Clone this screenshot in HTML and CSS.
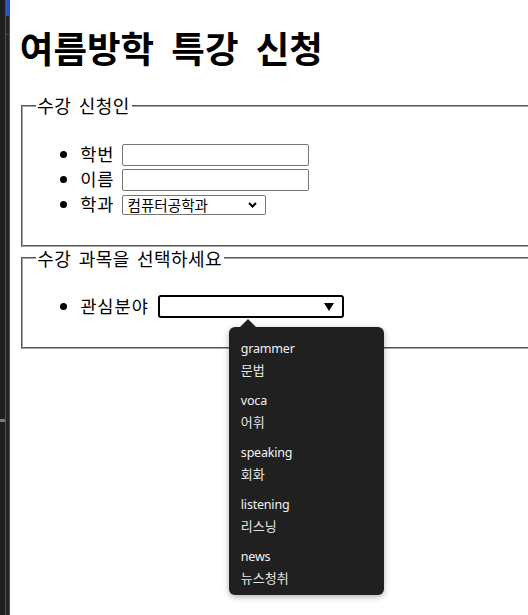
FILE: index.html
```html
<!DOCTYPE html>
<html lang="ko">
  <head>
    <meta charset="utf-8" />
    <title>여름방학 특강 신청</title>
    <link rel="stylesheet" href="styles.css">
  </head>
  <body>
    <div class="page">
      <div class="gutter">
        <div class="gutter-col">
          <span class="gutter-tick"></span>
        </div>
        <div class="gutter-line"></div>
        <div class="gutter-rail">
          <span class="gutter-active"></span>
          <span class="gutter-mark"></span>
        </div>
        <div class="gutter-line"></div>
      </div>

      <main class="doc">
        <h1>여름방학 특강 신청</h1>

        <fieldset>
          <legend>수강 신청인</legend>
          <ul>
            <li>학번 <input type="text" class="text-input" /></li>
            <li>이름 <input type="text" class="text-input" /></li>
            <li>
              학과
              <span class="select-wrap">
                <select class="select">
                  <option>컴퓨터공학과</option>
                  <option>전자공학과</option>
                  <option>기계공학과</option>
                </select>
                <svg class="chevron" width="9" height="6" viewBox="0 0 9 6">
                  <path d="M1 1l3.5 3.5L8 1" fill="none" stroke="#000" stroke-width="2" />
                </svg>
              </span>
            </li>
          </ul>
        </fieldset>

        <fieldset>
          <legend>수강 과목을 선택하세요</legend>
          <ul>
            <li>
              관심분야
              <span class="combo">
                <input type="text" class="combo-input" list="subjects" />
                <span class="combo-arrow"></span>

                <div class="datalist">
                  <span class="datalist-caret"></span>
                  <div class="datalist-item">
                    <div class="item-value">grammer</div>
                    <div class="item-label">문법</div>
                  </div>
                  <div class="datalist-item">
                    <div class="item-value">voca</div>
                    <div class="item-label">어휘</div>
                  </div>
                  <div class="datalist-item">
                    <div class="item-value">speaking</div>
                    <div class="item-label">회화</div>
                  </div>
                  <div class="datalist-item">
                    <div class="item-value">listening</div>
                    <div class="item-label">리스닝</div>
                  </div>
                  <div class="datalist-item">
                    <div class="item-value">news</div>
                    <div class="item-label">뉴스청취</div>
                  </div>
                </div>
              </span>
            </li>
          </ul>
        </fieldset>
      </main>
    </div>
  </body>
</html>
```

FILE: styles.css
```css
html,
body {
  margin: 0;
  padding: 0;
  height: 615px;
  overflow: hidden;
  background: #fff;
}
body {
  font-family: "Malgun Gothic", "Noto Sans CJK KR", "Noto Sans", sans-serif;
  font-size: 17.6px;
  line-height: 23px;
  color: #000;
}
.page {
  display: flex;
  height: 615px;
}

/* editor gutter on the left */
.gutter {
  display: flex;
  flex: none;
  width: 10px;
  background-color: #1f1f1f;
}
.gutter-col {
  width: 5px;
  display: flex;
  flex-direction: column;
}
.gutter-tick {
  display: block;
  margin-top: 419px;
  height: 3px;
  background-color: #7a7a7a;
}
.gutter-line {
  width: 1px;
  background-color: #4e4e4e;
}
.gutter-rail {
  width: 3px;
  display: flex;
  flex-direction: column;
  background-color: #252525;
}
.gutter-active {
  display: block;
  height: 16px;
  background-color: #2d55c8;
}
.gutter-mark {
  display: block;
  margin-top: 18px;
  height: 1px;
  background-color: #4a4a4a;
}

/* page content */
.doc {
  flex: none;
  width: 640px;
  padding: 0 8.8px;
}
.doc h1 {
  font-size: 36.5px;
  line-height: 47px;
  font-weight: 700;
  word-spacing: 7px;
  margin: 23.6px 0 23.6px 1px;
}
fieldset {
  margin: 0 2.2px;
  padding: 6.2px 13.2px 11px;
  border: 2px groove #a8a8a8;
}
legend {
  padding: 0 2.2px 0 1.2px;
  font-size: 18px;
  line-height: 23px;
  letter-spacing: 0.4px;
  word-spacing: 2px;
}
ul {
  margin: 17.6px 0;
  padding-left: 44px;
}
li {
  height: 25px;
  line-height: 25px;
  letter-spacing: 1px;
}
.text-input {
  box-sizing: border-box;
  width: 187px;
  height: 22px;
  margin: 3px 0 0 2px;
  padding: 1px 2px;
  border: 1px solid #767676;
  border-radius: 2px;
  vertical-align: top;
  font-size: 14.6px;
}
.select-wrap {
  position: relative;
  display: inline-block;
  margin: 4px 0 0 2px;
  vertical-align: top;
  line-height: 0;
  letter-spacing: 0;
}
.select {
  appearance: none;
  box-sizing: border-box;
  width: 144px;
  height: 20px;
  margin: 0;
  padding: 0 20px 0 4px;
  border: 1px solid #767676;
  border-radius: 2px;
  background: #fff;
  color: #000;
  font-family: "Malgun Gothic", "Noto Sans CJK KR", sans-serif;
  font-size: 14.6px;
  line-height: 18px;
}
.chevron {
  position: absolute;
  right: 9px;
  top: 7px;
}

/* input with datalist */
.combo {
  position: relative;
  display: inline-block;
  margin: 2px 0 0 3px;
  vertical-align: top;
  line-height: 0;
  letter-spacing: 0;
}
.combo-input {
  box-sizing: border-box;
  width: 186px;
  height: 23px;
  margin: 0;
  padding: 1px 24px 1px 3px;
  border: 2px solid #000;
  border-radius: 3px;
  outline: none;
  font-size: 14.6px;
}
.combo-arrow {
  position: absolute;
  right: 10px;
  top: 8px;
  width: 0;
  height: 0;
  border-left: 5px solid transparent;
  border-right: 5px solid transparent;
  border-top: 8px solid #000;
}
.datalist {
  position: absolute;
  left: 71px;
  top: 32px;
  width: 155px;
  height: 268px;
  box-sizing: border-box;
  padding: 6px 0 3px;
  background-color: #202020;
  border-radius: 6px;
  box-shadow: 0 2px 6px rgba(0, 0, 0, 0.3);
  font-family: "Segoe UI", "Noto Sans", "Noto Sans CJK KR", sans-serif;
  font-size: 12.5px;
  letter-spacing: -0.2px;
  line-height: 21px;
  color: #f2f2f2;
  z-index: 5;
}
.datalist-caret {
  position: absolute;
  left: 11px;
  top: -8px;
  width: 0;
  height: 0;
  border-left: 8px solid transparent;
  border-right: 8px solid transparent;
  border-bottom: 8px solid #202020;
}
.datalist-item {
  padding: 5px 12px;
}
.item-label {
  color: #e4e4e4;
  font-family: "Malgun Gothic", "Noto Sans CJK KR", sans-serif;
  font-size: 13px;
  letter-spacing: 0;
}
```
